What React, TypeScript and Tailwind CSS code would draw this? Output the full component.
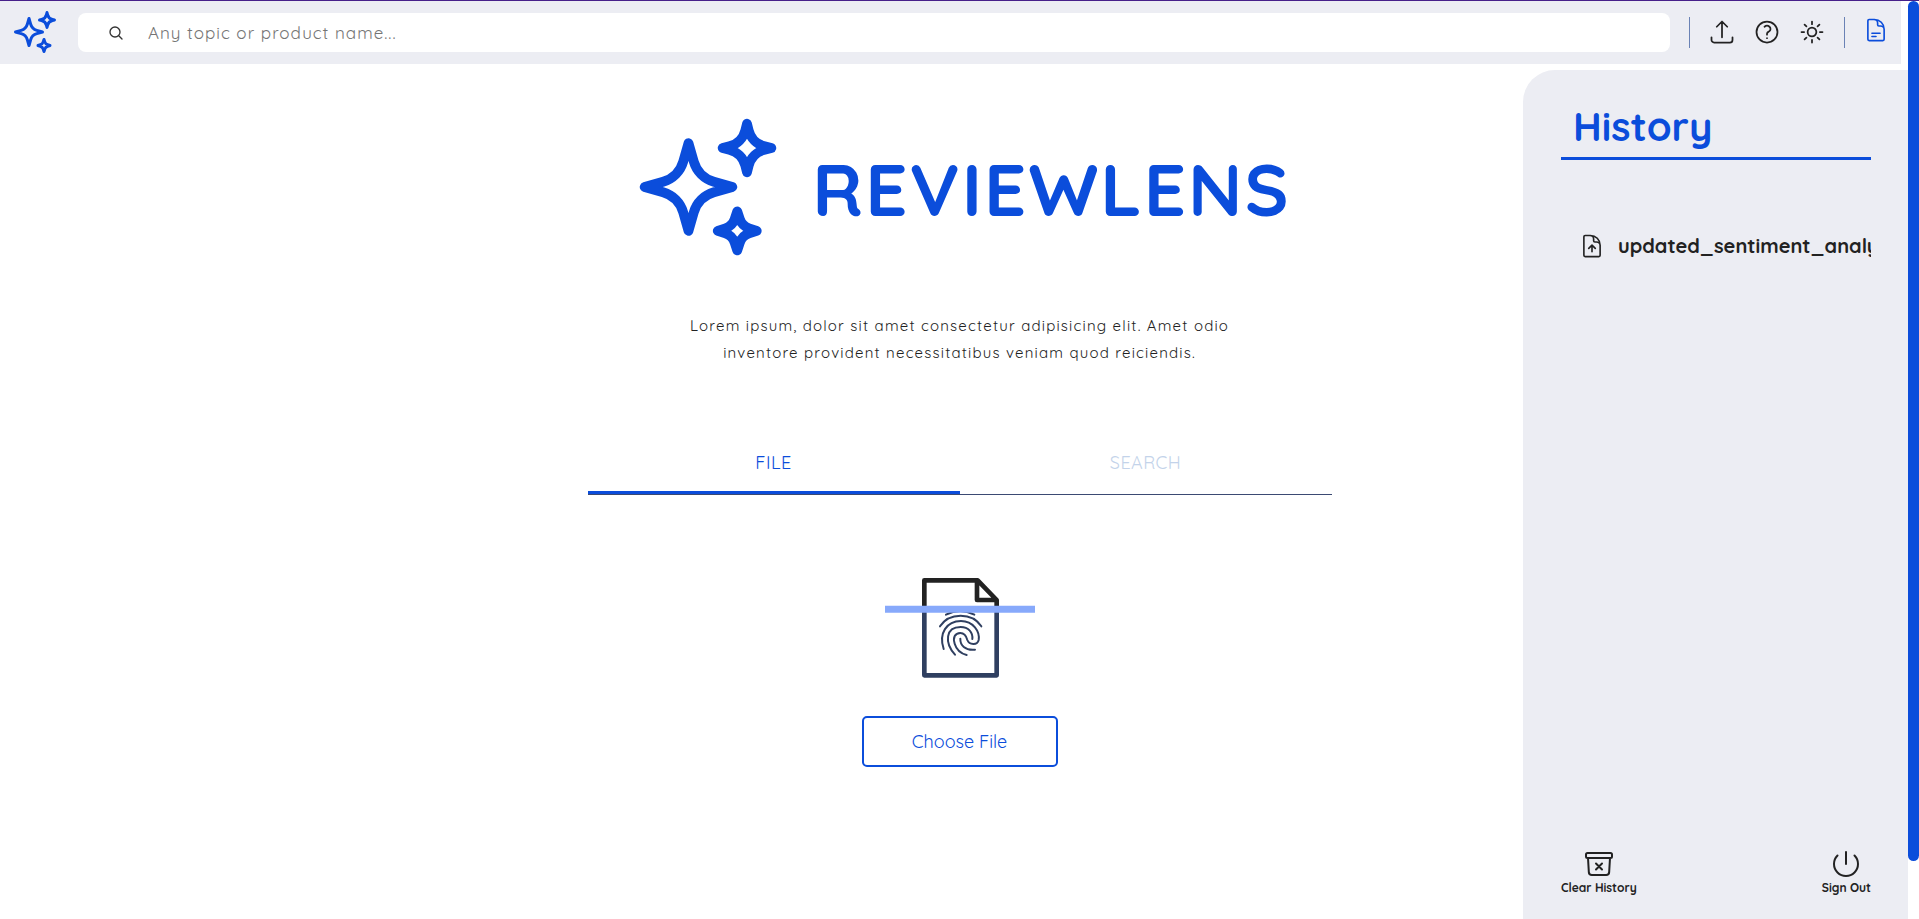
import { useState } from "react";
import {
  HiOutlineArchiveBoxXMark,
  HiOutlineArrowUpTray,
  HiOutlineDocumentArrowUp,
  HiOutlineDocumentText,
  HiOutlineMagnifyingGlass,
  HiOutlinePower,
  HiOutlineQuestionMarkCircle,
  HiOutlineSparkles,
  HiOutlineSun,
} from "react-icons/hi2";

function Header() {
  return (
    <header className="mr-[18px] flex h-[63px] items-center bg-[#ecedf3] pl-[11px] pr-3">
      <a href="#home" aria-label="ReviewLens home" className="pb-px text-[#0b4ddb]">
        <HiOutlineSparkles className="size-12" />
      </a>
      <label className="ml-[19px] flex h-[39px] flex-1 items-center rounded-lg bg-white pl-[30px]">
        <HiOutlineMagnifyingGlass className="size-4 text-[#333]" strokeWidth={2} />
        <input
          type="search"
          aria-label="Search"
          placeholder="Any topic or product name..."
          className="ml-6 h-full min-w-0 flex-1 bg-transparent text-[17px] tracking-[1px] outline-none placeholder:text-[#757575]"
        />
      </label>
      <div className="ml-[19px] flex h-[31px] items-center gap-[17px] border-x border-[#6a82b5] px-[18px] pb-0.5 text-[#222]">
        <button type="button" aria-label="Upload">
          <HiOutlineArrowUpTray className="size-7" />
        </button>
        <button type="button" aria-label="Help">
          <HiOutlineQuestionMarkCircle className="size-7" />
        </button>
        <button type="button" aria-label="Theme">
          <HiOutlineSun className="size-7" />
        </button>
      </div>
      <button type="button" aria-label="History" className="ml-[18px] pb-[5px] text-[#0b4ddb]">
        <HiOutlineDocumentText className="size-[26px]" />
      </button>
    </header>
  );
}

function FileScan() {
  return (
    <svg viewBox="0 0 450 306" className="h-[102px] w-[150px]" fill="none" aria-hidden="true">
      <defs>
        <linearGradient id="scan" gradientUnits="userSpaceOnUse" x1="0" y1="0" x2="0" y2="306">
          <stop offset="0.38" stopColor="#222" />
          <stop offset="0.38" stopColor="#2f3f60" />
        </linearGradient>
      </defs>
      <g transform="translate(75 -21)" stroke="url(#scan)" strokeLinecap="round" strokeLinejoin="round">
        <path strokeWidth="14" d="M43 31H203L260 90V316H43Z M201 33V90H258" />
        <path
          strokeWidth="6"
          d="M108 134Q150 112 193 134 M90 169C104 147 126 137 152 137S200 147 214 169 M101 237C85 190 110 153 153 153C190 153 210 185 206 210C202 227 178 225 172 210C168 195 162 189 151 189C135 189 128 203 134 221C139 238 152 250 170 255 M135 254C103 218 106 171 152 171C176 171 189 188 187 207 M195 239C165 242 150 225 151 206"
        />
      </g>
      <path d="M0 86H450V107H0Z" fill="#87a9fb" />
    </svg>
  );
}

function Main() {
  const [tab, setTab] = useState("file");
  const item = "flex-1 border-b-[3px] pb-4 pt-[13px] text-center text-lg leading-6 tracking-wide";
  const on = "border-[#0b4ddb] text-[#0b4ddb]";
  const off = "border-transparent text-[#c3d3ea]";
  return (
    <main className="col-start-2 flex flex-col items-center pt-[45px]">
      <h1 className="flex items-center gap-[26px] pl-0.5 text-[#0b4ddb]">
        <HiOutlineSparkles className="size-[156px]" />
        <span className="pt-1 text-[74px] font-bold leading-none tracking-[2px]">REVIEWLENS</span>
      </h1>
      <p className="mt-[47px] w-[570px] text-center text-[15px] leading-[27px] tracking-[0.08em] text-[#222]">
        Lorem ipsum, dolor sit amet consectetur adipisicing elit. Amet odio inventore provident necessitatibus
        veniam quod reiciendis.
      </p>
      <div role="tablist" className="mt-[72px] flex w-full border-b border-[#3b4a73]">
        <button type="button" role="tab" aria-selected={tab === "file"} onClick={() => setTab("file")} className={`${item} ${tab === "file" ? on : off}`}>
          FILE
        </button>
        <button type="button" role="tab" aria-selected={tab === "search"} onClick={() => setTab("search")} className={`${item} ${tab === "search" ? on : off}`}>
          SEARCH
        </button>
      </div>
      <div className="mt-[82px]">
        <FileScan />
      </div>
      <button type="button" className="mt-[37px] h-[51px] w-[196px] rounded-[5px] border-2 border-[#0b4ddb] text-lg text-[#0b4ddb]">
        Choose File
      </button>
    </main>
  );
}

function History() {
  const action = "flex flex-col items-center text-xs font-bold leading-4";
  return (
    <aside className="mr-[11px] mt-1.5 flex w-[385px] flex-col justify-self-end rounded-tl-[32px] bg-[#ecedf3] pb-[23px] pl-[38px] pr-[37px] text-[#222]">
      <h2 className="border-b-[3px] border-[#0b4ddb] pb-[9px] pl-3 pt-[34px] text-[40px] font-bold leading-[44px] text-[#0b4ddb]">
        History
      </h2>
      <ul className="mt-[73px]">
        <li>
          <a href="#file" className="flex items-center overflow-hidden pl-[18px] text-xl font-bold leading-[26px]">
            <HiOutlineDocumentArrowUp className="size-[26px] shrink-0" />
            <span className="ml-[13px] whitespace-nowrap">updated_sentiment_analysis</span>
          </a>
        </li>
      </ul>
      <div className="mt-auto flex justify-between">
        <button type="button" className={action}>
          <HiOutlineArchiveBoxXMark className="size-8" />
          Clear History
        </button>
        <button type="button" className={action}>
          <HiOutlinePower className="size-8" />
          Sign Out
        </button>
      </div>
    </aside>
  );
}

export default function App() {
  return (
    <div className="relative flex min-h-screen flex-col border-t border-[#46208a] bg-white font-['Quicksand',Lato,sans-serif]">
      <Header />
      <div className="grid flex-1 grid-cols-[1fr_744px_1fr]">
        <Main />
        <History />
      </div>
      <div className="absolute right-0 top-0 h-[860px] w-[11px] rounded-md bg-[#0b4ddb]" />
    </div>
  );
}
